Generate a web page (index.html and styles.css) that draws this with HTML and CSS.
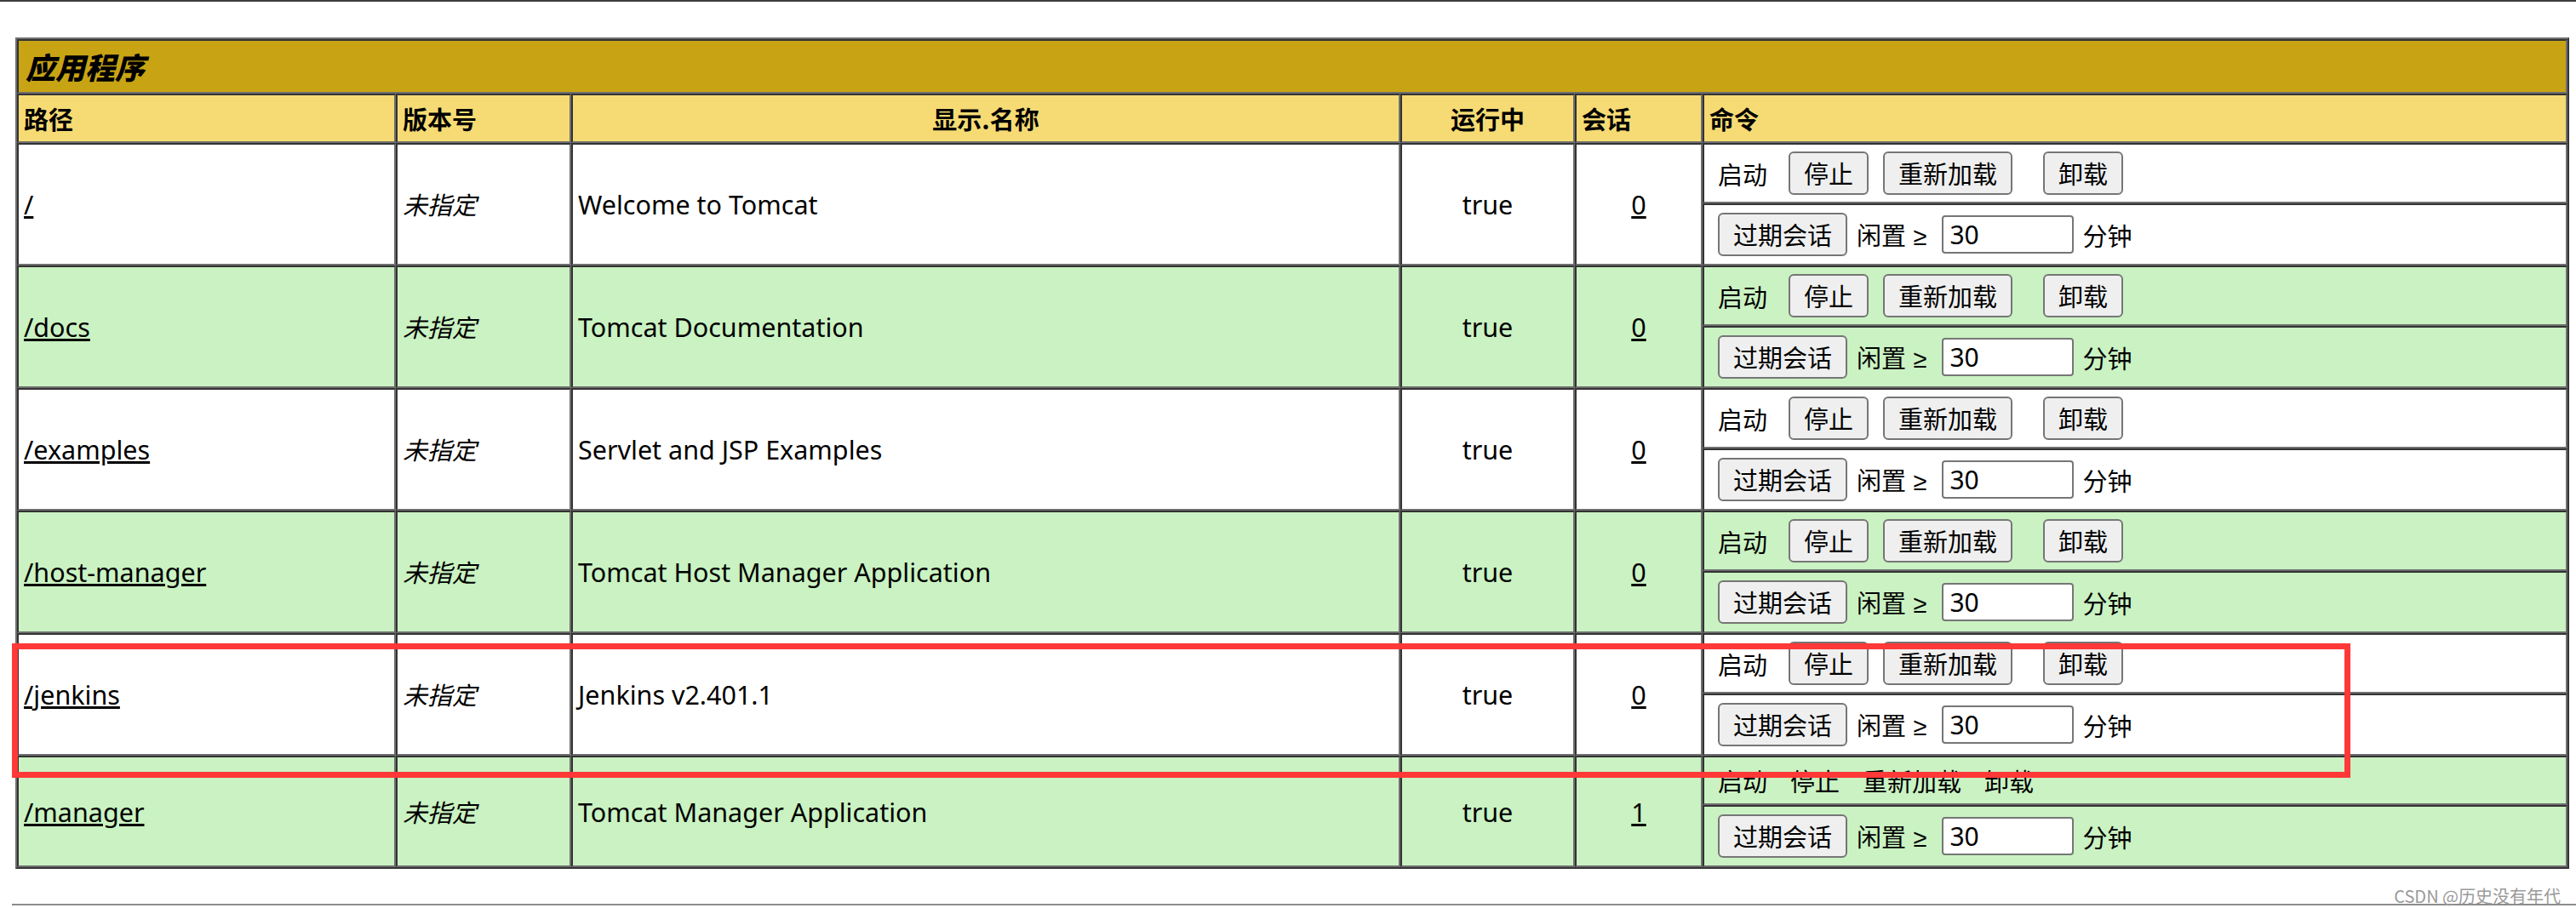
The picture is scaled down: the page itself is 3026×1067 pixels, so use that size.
FILE: index.html
```html
<!DOCTYPE html>
<html lang="zh-CN">
<head>
    <meta charset="UTF-8">
    <title>Tomcat Web应用程序管理者</title>
    <link rel="stylesheet" href="styles.css">
</head>
<body>
    <div class="rule-top"></div>

    <table class="apps">
        <colgroup>
            <col class="c-path">
            <col class="c-ver">
            <col class="c-name">
            <col class="c-run">
            <col class="c-sess">
            <col class="c-cmd">
        </colgroup>
        <tr>
            <td colspan="6" class="title">应用程序</td>
        </tr>
        <tr class="head">
            <th>路径</th>
            <th>版本号</th>
            <th class="center">显示.名称</th>
            <th class="center">运行中</th>
            <th>会话</th>
            <th>命令</th>
        </tr>

        <!-- / -->
        <tr class="row-white">
            <td rowspan="2" class="latin"><a href="#">/</a></td>
            <td rowspan="2"><i>未指定</i></td>
            <td rowspan="2" class="latin">Welcome to Tomcat</td>
            <td rowspan="2" class="latin center">true</td>
            <td rowspan="2" class="latin center"><a href="#">0</a></td>
            <td class="cmd">
                <div class="cmd-line">
                    <span class="off">启动</span>
                    <button class="b-stop">停止</button>
                    <button class="b-reload">重新加载</button>
                    <button>卸载</button>
                </div>
            </td>
        </tr>
        <tr class="row-white">
            <td class="cmd">
                <div class="cmd-line expire">
                    <button>过期会话</button>
                    <span class="idle">闲置 <span class="ge">≥</span></span>
                    <input class="idle-input" type="text" value="30">
                    <span>分钟</span>
                </div>
            </td>
        </tr>

        <!-- /docs -->
        <tr class="row-green">
            <td rowspan="2" class="latin"><a href="#">/docs</a></td>
            <td rowspan="2"><i>未指定</i></td>
            <td rowspan="2" class="latin">Tomcat Documentation</td>
            <td rowspan="2" class="latin center">true</td>
            <td rowspan="2" class="latin center"><a href="#">0</a></td>
            <td class="cmd">
                <div class="cmd-line">
                    <span class="off">启动</span>
                    <button class="b-stop">停止</button>
                    <button class="b-reload">重新加载</button>
                    <button>卸载</button>
                </div>
            </td>
        </tr>
        <tr class="row-green">
            <td class="cmd">
                <div class="cmd-line expire">
                    <button>过期会话</button>
                    <span class="idle">闲置 <span class="ge">≥</span></span>
                    <input class="idle-input" type="text" value="30">
                    <span>分钟</span>
                </div>
            </td>
        </tr>

        <!-- /examples -->
        <tr class="row-white">
            <td rowspan="2" class="latin"><a href="#">/examples</a></td>
            <td rowspan="2"><i>未指定</i></td>
            <td rowspan="2" class="latin">Servlet and JSP Examples</td>
            <td rowspan="2" class="latin center">true</td>
            <td rowspan="2" class="latin center"><a href="#">0</a></td>
            <td class="cmd">
                <div class="cmd-line">
                    <span class="off">启动</span>
                    <button class="b-stop">停止</button>
                    <button class="b-reload">重新加载</button>
                    <button>卸载</button>
                </div>
            </td>
        </tr>
        <tr class="row-white">
            <td class="cmd">
                <div class="cmd-line expire">
                    <button>过期会话</button>
                    <span class="idle">闲置 <span class="ge">≥</span></span>
                    <input class="idle-input" type="text" value="30">
                    <span>分钟</span>
                </div>
            </td>
        </tr>

        <!-- /host-manager -->
        <tr class="row-green">
            <td rowspan="2" class="latin"><a href="#">/host-manager</a></td>
            <td rowspan="2"><i>未指定</i></td>
            <td rowspan="2" class="latin">Tomcat Host Manager Application</td>
            <td rowspan="2" class="latin center">true</td>
            <td rowspan="2" class="latin center"><a href="#">0</a></td>
            <td class="cmd">
                <div class="cmd-line">
                    <span class="off">启动</span>
                    <button class="b-stop">停止</button>
                    <button class="b-reload">重新加载</button>
                    <button>卸载</button>
                </div>
            </td>
        </tr>
        <tr class="row-green">
            <td class="cmd">
                <div class="cmd-line expire">
                    <button>过期会话</button>
                    <span class="idle">闲置 <span class="ge">≥</span></span>
                    <input class="idle-input" type="text" value="30">
                    <span>分钟</span>
                </div>
            </td>
        </tr>

        <!-- /jenkins -->
        <tr class="row-white">
            <td rowspan="2" class="latin"><a href="#">/jenkins</a></td>
            <td rowspan="2"><i>未指定</i></td>
            <td rowspan="2" class="latin">Jenkins v2.401.1</td>
            <td rowspan="2" class="latin center">true</td>
            <td rowspan="2" class="latin center"><a href="#">0</a></td>
            <td class="cmd">
                <div class="cmd-line">
                    <span class="off">启动</span>
                    <button class="b-stop">停止</button>
                    <button class="b-reload">重新加载</button>
                    <button>卸载</button>
                </div>
            </td>
        </tr>
        <tr class="row-white">
            <td class="cmd">
                <div class="cmd-line expire">
                    <button>过期会话</button>
                    <span class="idle">闲置 <span class="ge">≥</span></span>
                    <input class="idle-input" type="text" value="30">
                    <span>分钟</span>
                </div>
            </td>
        </tr>

        <!-- /manager: can't stop itself, so no buttons -->
        <tr class="row-green">
            <td rowspan="2" class="latin"><a href="#">/manager</a></td>
            <td rowspan="2"><i>未指定</i></td>
            <td rowspan="2" class="latin">Tomcat Manager Application</td>
            <td rowspan="2" class="latin center">true</td>
            <td rowspan="2" class="latin center"><a href="#">1</a></td>
            <td class="cmd">
                <div class="cmd-line plain">
                    <span>启动</span>
                    <span>停止</span>
                    <span>重新加载</span>
                    <span>卸载</span>
                </div>
            </td>
        </tr>
        <tr class="row-green">
            <td class="cmd">
                <div class="cmd-line expire">
                    <button>过期会话</button>
                    <span class="idle">闲置 <span class="ge">≥</span></span>
                    <input class="idle-input" type="text" value="30">
                    <span>分钟</span>
                </div>
            </td>
        </tr>
    </table>

    <div class="rule-bottom"></div>

    <div class="mark"></div>
    <div class="watermark">CSDN @历史没有年代</div>
</body>
</html>
```

FILE: styles.css
```css
body {
    margin: 0;
    width: 3026px;
    height: 1067px;
    overflow: hidden;
    position: relative;
    background: #fff;
    color: #000;
    font-family: "Noto Sans", "Noto Sans CJK SC", sans-serif;
    font-size: 29px;
}
.rule-top {
    height: 2px;
    background: #3c3c3c;
}
.rule-bottom {
    height: 2px;
    margin: 41px 0 0 14px;
    background: #8c8c8c;
}

/* app list table */
.apps {
    margin: 42px 0 0 18px;
    width: 3000px;
    table-layout: fixed;
    border-collapse: separate;
    border-spacing: 0;
    border: 2px solid;
    border-color: #707070 #333 #333 #707070;
}
.c-path { width: 445px; }
.c-ver { width: 206px; }
.c-name { width: 974px; }
.c-run { width: 205px; }
.c-sess { width: 150px; }
.c-cmd { width: 1016px; }
.apps td,
.apps th {
    border: 2px solid;
    border-color: #333 #6f6f6f #6f6f6f #333;
    padding: 6px;
    line-height: 42px;
    vertical-align: middle;
    text-align: left;
    white-space: nowrap;
}
.apps td.latin {
    font-size: 30.5px;
}
.apps a {
    color: #000;
}
.apps .center {
    text-align: center;
}
.apps .title {
    background: #c8a415;
    font-family: "Noto Sans CJK SC", sans-serif;
    font-size: 35px;
    font-weight: 900;
    font-style: italic;
    line-height: 48px;
    padding-left: 8px;
}
.head th {
    background: #f6db74;
    font-family: "Noto Sans CJK SC", sans-serif;
    font-weight: bold;
}
.row-white td {
    background: #fff;
}
.row-green td {
    background: #caf2c2;
}
.apps i {
    font-family: "Noto Sans CJK SC", sans-serif;
}

/* commands column */
.apps td.cmd {
    padding: 6px 6px 6px 16px;
}
.cmd-line {
    display: flex;
    align-items: center;
    height: 55px;
    font-family: "Noto Sans CJK SC", sans-serif;
}
.cmd-line.expire {
    height: 57px;
}
.cmd-line.plain {
    height: 42px;
}
.cmd-line.plain span {
    margin-right: 27px;
}
.off {
    margin-right: 25px;
}
button {
    font-family: "Noto Sans CJK SC", sans-serif;
    font-size: 29px;
    line-height: 39px;
    padding: 4px 16px;
    border: 2px solid #767676;
    border-radius: 6px;
    background: #efefef;
    color: #000;
}
.b-stop {
    margin-right: 17px;
}
.b-reload {
    margin-right: 36px;
}
.idle {
    margin: 0 12px 0 11px;
}
.ge {
    font-family: "Noto Sans", sans-serif;
    margin-left: 2px;
    margin-right: 6px;
}
.idle-input {
    box-sizing: border-box;
    width: 155px;
    height: 45px;
    margin-right: 10px;
    padding: 0 7px;
    border: 2px solid #767676;
    border-radius: 4px;
    background: #fff;
    font-family: "Noto Sans", sans-serif;
    font-size: 30px;
    color: #000;
}

/* annotation overlay from the screenshot */
.mark {
    position: absolute;
    left: 14px;
    top: 756px;
    width: 2747px;
    height: 158px;
    box-sizing: border-box;
    border: 7px solid #ff3838;
}
.watermark {
    position: absolute;
    right: 18px;
    top: 1038px;
    font-family: "Noto Sans CJK SC", sans-serif;
    font-size: 20px;
    color: #9a9a9a;
}
```
